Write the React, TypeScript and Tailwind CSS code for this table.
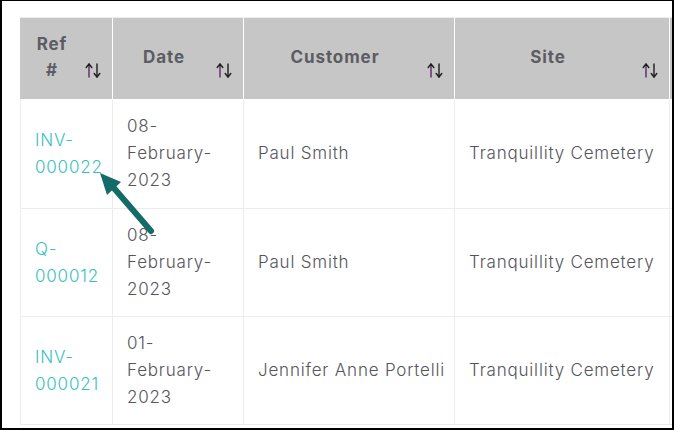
import React from "react";

const font = { fontFamily: "Inter, 'Noto Sans', sans-serif" };

function SortIcon() {
  return (
    <svg className="absolute right-[9px] top-[44px]" width="19" height="17" viewBox="0 0 19 17">
      <g fill="none" strokeWidth="1.4" strokeLinecap="round" strokeLinejoin="round">
        <path d="M5 15V2" stroke="#5a2a6a" />
        <path d="M2.2 5.5L5 2L7.8 5.5" stroke="#1e1e1e" />
        <path d="M13 2V15" stroke="#1e1e1e" />
        <path d="M10.2 11.5L13 15L15.8 11.5" stroke="#1e1e1e" />
      </g>
    </svg>
  );
}

function Th({ children, last }: { children: React.ReactNode; last?: boolean }) {
  return (
    <div className={`relative flex items-center h-[81px] bg-[#c6c6c6] pl-[14px] pr-[42px] pb-[3px] ${last ? "" : "border-r border-white"}`}>
      <div className="w-full text-center text-[17px] leading-[26px] font-bold tracking-[0.9px] text-[#5c5c63]">{children}</div>
      {!last && <SortIcon />}
    </div>
  );
}

function Td({ children, first, link, tall }: { children?: React.ReactNode; first?: boolean; link?: boolean; tall?: boolean }) {
  return (
    <div
      className={`flex items-center ${tall ? "h-[110px]" : "h-[108px]"} px-[14px] border-b border-r border-[#ececec] ${first ? "border-l" : ""} text-[17px] leading-[27px] font-light tracking-[0.8px] ${link ? "text-[#3bbfbf]" : "text-[#55555c]"}`}
    >
      <div className="whitespace-nowrap">{children}</div>
    </div>
  );
}

const rows = [
  { ref: ["INV-", "000022"], date: ["08-", "February-", "2023"], cust: "Paul Smith", site: "Tranquillity Cemetery" },
  { ref: ["Q-", "000012"], date: ["08-", "February-", "2023"], cust: "Paul Smith", site: "Tranquillity Cemetery" },
  { ref: ["INV-", "000021"], date: ["01-", "February-", "2023"], cust: "Jennifer Anne Portelli", site: "Tranquillity Cemetery" },
];

export default function App() {
  return (
    <div
      style={font}
      className="relative w-[674px] h-[430px] overflow-hidden bg-white border-t border-l-2 border-r-2 border-b-2 border-black pt-[16px] pl-[18px]"
    >
      <div className="border-t border-[#ececec] w-[760px]">
        <div className="grid grid-cols-[93px_131px_211px_215px_110px]">
          <Th>Ref #</Th>
          <Th>Date</Th>
          <Th>Customer</Th>
          <Th>Site</Th>
          <Th last> </Th>
          {rows.map((r, i) => (
            <React.Fragment key={i}>
              <Td first link tall={i === 0}>
                {r.ref[0]}
                <br />
                {r.ref[1]}
              </Td>
              <Td tall={i === 0}>
                {r.date[0]}
                <br />
                {r.date[1]}
                <br />
                {r.date[2]}
              </Td>
              <Td tall={i === 0}>{r.cust}</Td>
              <Td tall={i === 0}>{r.site}</Td>
              <Td tall={i === 0} />
            </React.Fragment>
          ))}
        </div>
      </div>
      <svg className="absolute left-0 top-0" width="674" height="430" viewBox="0 0 674 430">
        <line x1="149" y1="230" x2="111" y2="186" stroke="#146b68" strokeWidth="6" strokeLinecap="round" />
        <polygon points="98,172 119,181 105,194" fill="#146b68" />
      </svg>
    </div>
  );
}
